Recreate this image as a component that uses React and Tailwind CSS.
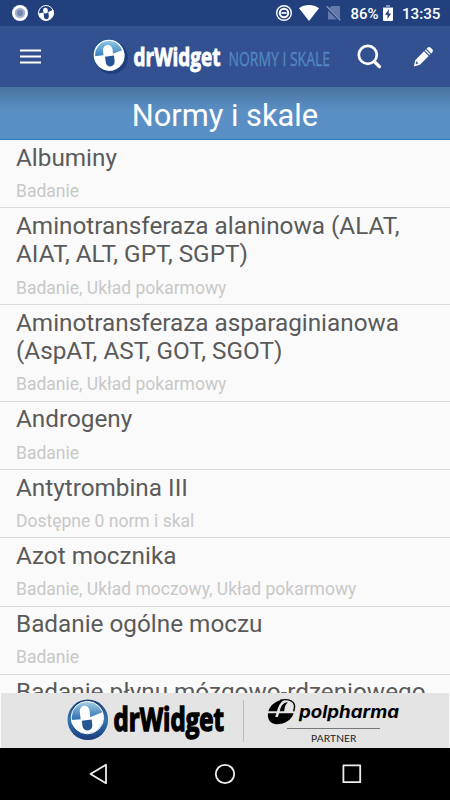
const items = [
  { title: "Albuminy", tags: "Badanie" },
  { title: "Aminotransferaza alaninowa (ALAT, AIAT, ALT, GPT, SGPT)", tags: "Badanie, Układ pokarmowy" },
  { title: "Aminotransferaza asparaginianowa (AspAT, AST, GOT, SGOT)", tags: "Badanie, Układ pokarmowy" },
  { title: "Androgeny", tags: "Badanie" },
  { title: "Antytrombina III", tags: "Dostępne 0 norm i skal" },
  { title: "Azot mocznika", tags: "Badanie, Układ moczowy, Układ pokarmowy" },
  { title: "Badanie ogólne moczu", tags: "Badanie" },
  { title: "Badanie płynu mózgowo-rdzeniowego", tags: "Badanie" },
];

function StatusBar() {
  return (
    <div className="flex h-[26px] shrink-0 items-center bg-[#23407e] pl-3 pr-[9px] text-white">
      <svg className="h-4 w-4" viewBox="0 0 16 16">
        <circle cx="8" cy="8" r="8" fill="#fff" />
        <circle cx="8" cy="8" r="5.2" fill="#a3b0cd" />
        <circle cx="8" cy="8" r="3" fill="#7487b3" />
      </svg>
      <svg className="ml-2.5 h-4 w-4" viewBox="0 0 16 16">
        <circle cx="8" cy="8" r="7.5" fill="#23407e" stroke="#fff" />
        <path d="M.5 8.6 5.6 7.6 6 12a2.3 2.3 0 0 0 4.6-.3L10.3 7l4.8-2.2A7.6 7.6 0 1 1 .5 8.6Z" fill="#fff" />
        <rect x="5.2" y="2.8" width="4.6" height="6" rx="2.2" fill="#fff" transform="rotate(-6 7.5 6)" />
        <path d="m6 8.8 4.2-.5.3 3a2 2 0 0 1-4.2.4Z" fill="#23407e" />
      </svg>
      <svg className="ml-auto h-4 w-4" viewBox="0 0 16 16" fill="none" stroke="#fff">
        <circle cx="8" cy="8" r="7.3" strokeWidth="1.4" />
        <circle cx="8" cy="8" r="4.2" strokeWidth="2" />
        <path d="M5.5 8h5" strokeWidth="1.7" />
      </svg>
      <svg className="ml-[7px] h-4 w-5" viewBox="0 0 20 16">
        <path d="M0 3.2C5.8-1 14.2-1 20 3.2L10 16Z" fill="#fff" />
      </svg>
      <svg className="ml-[7px] h-4 w-[15px]" viewBox="0 0 15 16">
        <path d="M5.5 1H13a1 1 0 0 1 1 1v12.5H2V4.5Z" fill="#657aaa" />
        <path d="m0 1.5 14 14" stroke="#23407e" strokeWidth="3" />
        <path d="m.7 1.2 13.6 14" stroke="#8696bd" strokeWidth="1.4" />
      </svg>
      <svg className="ml-[9px] h-5 w-[29px]" viewBox="0 0 29 20">
        <text x="0.5" y="16" textLength="28" lengthAdjust="spacingAndGlyphs" className="fill-white font-['Roboto',sans-serif] text-[15.5px] font-medium">86%</text>
      </svg>
      <svg className="ml-[4px] h-4 w-[10px]" viewBox="0 0 10 16">
        <path d="M3 0h4v2h3v2H0V2h3Z" fill="#8091ba" />
        <path d="M0 3h10v12a1 1 0 0 1-1 1H1a1 1 0 0 1-1-1Z" fill="#fff" />
        <path d="M6 4 2 9.8h2.5V14L8 8.4H5.6Z" fill="#23407e" />
      </svg>
      <svg className="ml-[9px] h-5 w-[39px]" viewBox="0 0 39 20">
        <text x="0" y="16" textLength="38.5" lengthAdjust="spacingAndGlyphs" className="fill-white font-['Roboto',sans-serif] text-[15.5px] font-medium">13:35</text>
      </svg>
    </div>
  );
}

function HeaderLogo() {
  return (
    <svg className="ml-[50px] h-[40px] w-[240px]" viewBox="0 0 240 40">
      <defs>
        <linearGradient id="headTop" x1="0" y1="0" x2="0" y2="1">
          <stop offset="0" stopColor="#8ccbea" />
          <stop offset=".55" stopColor="#397db8" />
        </linearGradient>
      </defs>
      <circle cx="20.5" cy="20.5" r="16.5" fill="#203e7c" />
      <circle cx="17" cy="17.5" r="16" fill="#24558f" />
      <circle cx="18" cy="18" r="14.6" fill="url(#headTop)" stroke="#fff" strokeWidth="1.4" />
      <path d="M3.6 19.3 14 18l8.5-1.5 9.8-3.8A15 15 0 1 1 3.6 19.3Z" fill="#fff" />
      <rect x="12.2" y="8" width="9.6" height="15" rx="4.8" fill="#fff" transform="rotate(-5 17 15)" />
      <path d="m14 19.8 9-1.4.6 6.2a4.4 4.4 0 0 1-8.8.9Z" fill="#245493" />
      <text x="42.5" y="29" textLength="87" lengthAdjust="spacingAndGlyphs" fill="#fff" stroke="#fff" strokeWidth=".9" className="font-['Open_Sans',sans-serif] text-[25px] font-bold">drWidget</text>
      <text x="137.5" y="29" textLength="101.5" lengthAdjust="spacingAndGlyphs" fill="#5288c1" stroke="#5288c1" strokeWidth=".35" className="font-['Open_Sans',sans-serif] text-[20.5px] font-normal">NORMY I SKALE</text>
    </svg>
  );
}

function AppBar() {
  return (
    <div className="relative z-10 flex h-[61px] shrink-0 items-center bg-[#335190] pl-5">
      <svg className="h-[15px] w-[21px]" viewBox="0 0 21 15" stroke="#fff" strokeWidth="2.2">
        <path d="M0 1.5h21M0 7.5h21M0 13.5h21" />
      </svg>
      <HeaderLogo />
      <svg className="ml-[26px] h-[25px] w-[25px]" viewBox="0 0 25 25" fill="none" stroke="#fff" strokeLinecap="round">
        <circle cx="10.8" cy="10.8" r="9" strokeWidth="2.7" />
        <path d="m17.4 17.6 5 5" strokeWidth="3.4" />
      </svg>
      <svg className="ml-[31px] h-[21px] w-[21px]" viewBox="0 0 21 21" fill="#fff">
        <path d="M14.5 1.7a2.3 2.3 0 0 1 3.2 0l1.5 1.5a2.3 2.3 0 0 1 0 3.2l-1 1-4.7-4.7Z" />
        <path d="m12.7 3.5 4.7 4.7-.9.9-4.7-4.7Z" />
        <path d="m11 5.2 4.7 4.7-8.8 8.9-6 1.7 1.3-6.3ZM3.4 15.2l-.7 2.9 2.8-.7Z" fillRule="evenodd" />
      </svg>
    </div>
  );
}

function BottomLogo() {
  return (
    <svg className="ml-[66px] h-[50px] w-[170px]" viewBox="0 0 170 50">
      <defs>
        <linearGradient id="ring" x1="0" y1="0" x2="0" y2="1">
          <stop offset="0" stopColor="#16386d" />
          <stop offset=".5" stopColor="#3478b5" />
          <stop offset="1" stopColor="#193a78" />
        </linearGradient>
        <linearGradient id="dome" x1="0" y1="0" x2="0" y2="1">
          <stop offset="0" stopColor="#a6d1e8" />
          <stop offset=".5" stopColor="#3678b5" />
        </linearGradient>
      </defs>
      <circle cx="20.8" cy="23.8" r="20.3" fill="url(#ring)" />
      <circle cx="20.4" cy="21.6" r="16.2" fill="url(#dome)" stroke="#fff" strokeWidth="1" />
      <path d="M4 24 15 23.2l9-2.4 11.6-4.6A16.3 16.3 0 1 1 4 24Z" fill="#fff" />
      <rect x="13.2" y="9.8" width="9.8" height="18" rx="4.9" fill="#fff" transform="rotate(-6 18 19)" />
      <path d="m14.8 24.8 9.9-1.4.6 5.8a4.9 4.9 0 0 1-9.8.8Z" fill="#235791" />
      <text x="46.5" y="35" textLength="110.5" lengthAdjust="spacingAndGlyphs" fill="#000" stroke="#000" strokeWidth="1.5" className="font-['Open_Sans',sans-serif] text-[33px] font-bold">drWidget</text>
    </svg>
  );
}

function PartnerLogo() {
  return (
    <svg className="ml-[23px] h-[50px] w-[133px]" viewBox="0 0 133 50">
      <path d="M1.4 15.3C3 9 9 4.2 17.5 3.4 13.5 6 11.5 9.5 10 15.3Z" fill="#000" />
      <path d="M13.2 4.2C22 2.4 28.6 5 27.4 12l-.7 3.3" fill="none" stroke="#000" strokeWidth="1.4" />
      <path d="M12.8 15.3c1-5 3-8.6 8-9-2.4 2-3 4.6-3.6 9Z" fill="#000" />
      <path d="M1 17.2h8.4L8.2 21h2.6l1.3-3.8h14.6C24.8 23.5 18 28.4 9 28.2 3 27.6.2 23 1 17.2Z" fill="#000" />
      <text x="32" y="22" textLength="100" lengthAdjust="spacingAndGlyphs" fill="#000" className="font-['Inter',sans-serif] text-[17px] font-bold italic">polpharma</text>
      <path d="M20 32.5h93" stroke="#777" strokeWidth="1" />
      <text x="44" y="46" textLength="45.5" lengthAdjust="spacing" fill="#222" className="font-['Lato',sans-serif] text-[10.2px]">PARTNER</text>
    </svg>
  );
}

function NavBar() {
  return (
    <div className="flex h-[52px] shrink-0 items-center bg-black pl-[89px]">
      <svg className="h-[22px] w-[19px]" viewBox="0 0 19 22" fill="none" stroke="#eee" strokeWidth="1.8" strokeLinejoin="round">
        <path d="M1.5 11 17 1.8v18.4Z" />
      </svg>
      <svg className="ml-[106px] h-[22px] w-[22px]" viewBox="0 0 22 22" fill="none" stroke="#eee" strokeWidth="1.8">
        <circle cx="11" cy="11" r="9.2" />
      </svg>
      <svg className="ml-[105px] h-[22px] w-[22px]" viewBox="0 0 22 22" fill="none" stroke="#eee" strokeWidth="1.8" strokeLinejoin="round">
        <path d="M2.4 2.4h16.8v16.8H2.4Z" />
      </svg>
    </div>
  );
}

export default function App() {
  return (
    <div className="flex h-[800px] w-[450px] flex-col overflow-hidden bg-[#fafafa] font-['Roboto',sans-serif]">
      <StatusBar />
      <AppBar />
      <div className="flex h-[53px] shrink-0 items-center justify-center border-b border-[#2f80c3] bg-[#5a8fc5] bg-linear-to-b from-[#48749f] to-[#5a8fc5] to-45% pt-[7px] text-[30.8px] leading-none text-white">
        <h1>Normy i skale</h1>
      </div>
      <ul className="min-h-0 flex-1 overflow-hidden">
        {items.map((item) => (
          <li key={item.title} className="border-b border-[#d9d9d9] px-4 pb-[5.9px] pt-[3.6px]">
            <p className="text-[24.3px] leading-[28.4px] text-[#5a5a5a]">{item.title}</p>
            <p className="mt-[8.9px] text-[17.5px] leading-[20.5px] text-[#c8c8c8]">{item.tags}</p>
          </li>
        ))}
      </ul>
      <div className="mx-px flex h-[55px] shrink-0 items-center bg-[#e4e4e4]">
        <BottomLogo />
        <div className="ml-1.5 h-[42px] w-px bg-[#bdbdbd]" />
        <PartnerLogo />
      </div>
      <NavBar />
    </div>
  );
}
